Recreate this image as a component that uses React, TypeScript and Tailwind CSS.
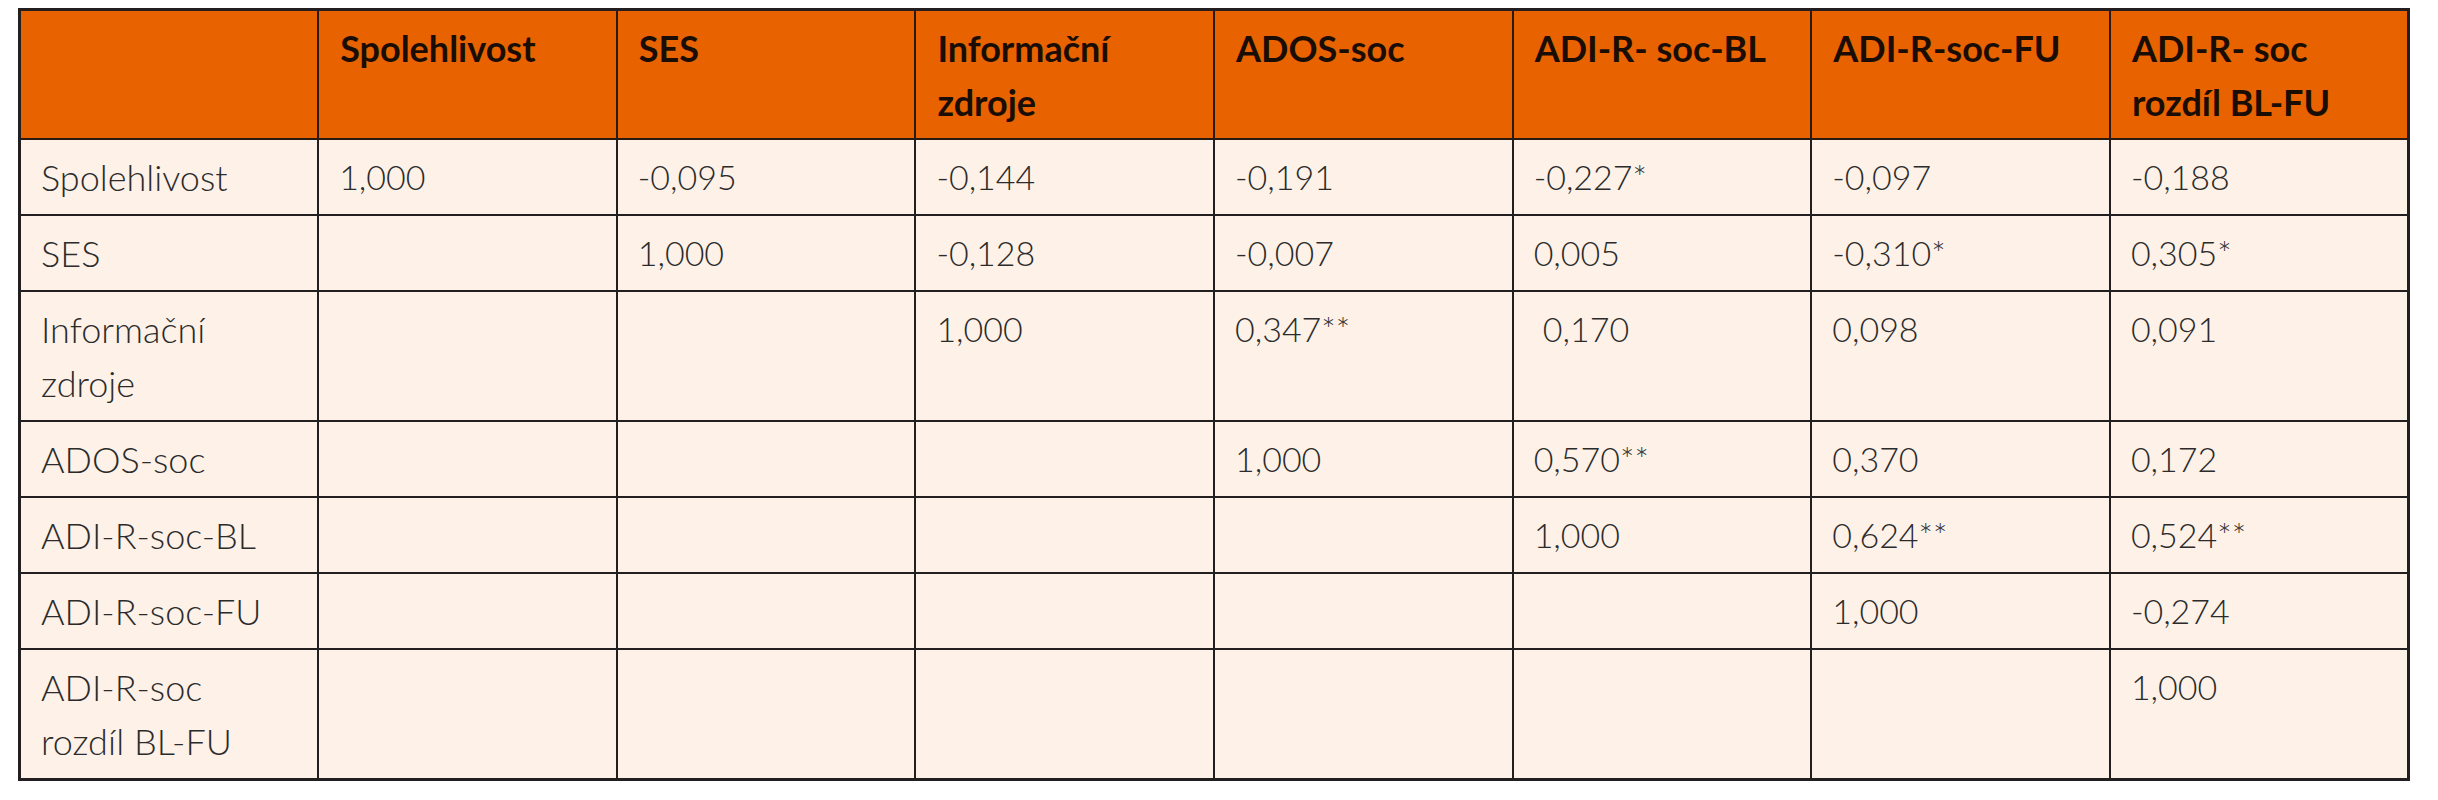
const headers: React.ReactNode[] = [
  "",
  "Spolehlivost",
  "SES",
  <>Informační<br />zdroje</>,
  "ADOS-soc",
  "ADI-R- soc-BL",
  "ADI-R-soc-FU",
  <>ADI-R- soc<br />rozdíl BL-FU</>,
];

const rows: { label: React.ReactNode; values: string[] }[] = [
  { label: "Spolehlivost", values: ["1,000", "-0,095", "-0,144", "-0,191", "-0,227*", "-0,097", "-0,188"] },
  { label: "SES", values: ["", "1,000", "-0,128", "-0,007", "0,005", "-0,310*", "0,305*"] },
  { label: <>Informační<br />zdroje</>, values: ["", "", "1,000", "0,347**", "\u00a00,170", "0,098", "0,091"] },
  { label: "ADOS-soc", values: ["", "", "", "1,000", "0,570**", "0,370", "0,172"] },
  { label: "ADI-R-soc-BL", values: ["", "", "", "", "1,000", "0,624**", "0,524**"] },
  { label: "ADI-R-soc-FU", values: ["", "", "", "", "", "1,000", "-0,274"] },
  { label: <>ADI-R-soc<br />rozdíl BL-FU</>, values: ["", "", "", "", "", "", "1,000"] },
];

export default function App() {
  return (
    <div className="min-h-screen bg-white pl-[18px] pt-[8px]">
      <table className="w-[2392px] table-fixed border-collapse border-[3px] border-[#231f20] font-['Lato','Liberation_Sans',sans-serif]">
        <thead>
          <tr className="bg-[#e86200]">
            {headers.map((h, i) => (
              <th
                key={i}
                className="border-2 border-[#2a1a14] px-[21px] pt-[10px] pb-[9px] text-left align-top text-[36px] font-bold leading-[54px] text-[#1a0d05]"
              >
                {h}
              </th>
            ))}
          </tr>
        </thead>
        <tbody>
          {rows.map((r, i) => (
            <tr key={i} className="bg-[#fdf1e8]">
              <td className="border-2 border-[#231f20] px-[20px] py-[10px] align-top text-[36px] font-light leading-[54px] text-[#2b2b2b]">
                {r.label}
              </td>
              {r.values.map((v, j) => (
                <td
                  key={j}
                  className="border-2 border-[#231f20] px-[20px] py-[10px] align-top text-[34px] font-light leading-[54px] text-[#2b2b2b] whitespace-pre"
                >
                  {v}
                </td>
              ))}
            </tr>
          ))}
        </tbody>
      </table>
    </div>
  );
}
